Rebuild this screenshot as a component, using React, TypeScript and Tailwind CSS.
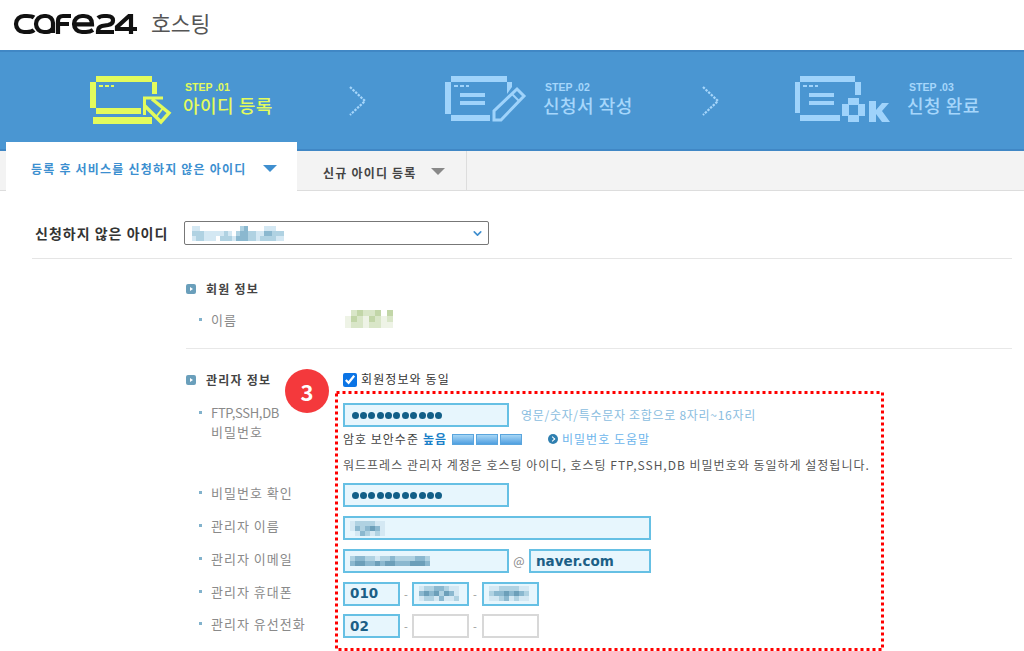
import React from "react";
import { ChevronDown } from "lucide-react";

const KR = "font-['Noto_Sans_CJK_KR','Noto_Sans',sans-serif]";

const blueCells: Record<string, string> = {
  "0": "bg-transparent",
  "1": "bg-[#d4e8f3]",
  "2": "bg-[#b0d2e2]",
  "3": "bg-[#8bb8cf]",
  "4": "bg-[#6c9fb9]",
};

const greenCells: Record<string, string> = {
  "0": "bg-transparent",
  "1": "bg-[#eef3e6]",
  "2": "bg-[#d9e6c8]",
  "3": "bg-[#c2d6a8]",
  "4": "bg-[#a8c48e]",
};

function Mosaic({ rows, size = "w-[5px] h-[5px]", palette = blueCells }: { rows: string[]; size?: string; palette?: Record<string, string> }) {
  return (
    <div className="flex flex-col blur-[0.7px]">
      {rows.map((row, i) => (
        <div key={i} className="flex">
          {row.split("").map((c, j) => (
            <span key={j} className={`${size} ${palette[c]}`} />
          ))}
        </div>
      ))}
    </div>
  );
}

function StepOneIcon() {
  return (
    <svg width="95" height="60" viewBox="0 0 95 60" className="shrink-0 fill-[#e3fb5c] stroke-none">
      <rect x="11" y="5" width="56" height="6" />
      <rect x="5" y="11" width="6" height="26" />
      <rect x="67" y="11" width="5" height="12" />
      <rect x="11" y="37" width="45" height="6" />
      <rect x="14" y="14" width="4" height="2" />
      <rect x="20" y="14" width="4" height="2" />
      <rect x="26" y="14" width="3" height="2" />
      <rect x="8" y="46" width="59" height="7" />
      <path d="M59.5 44V27H78" fill="none" stroke="#e3fb5c" strokeWidth="3" />
      <path d="M67 28L84 42L76 51L60 35" fill="none" stroke="#e3fb5c" strokeWidth="3.4" />
      <path d="M78 37L71 46" fill="none" stroke="#e3fb5c" strokeWidth="2" />
    </svg>
  );
}

function StepTwoIcon() {
  return (
    <svg width="95" height="60" viewBox="0 0 95 60" className="shrink-0 fill-[#9fd3fb] stroke-none">
      <rect x="11" y="5" width="56" height="6" />
      <rect x="5" y="11" width="6" height="32" />
      <path d="M67 11H72V16L67 23Z" />
      <rect x="11" y="44" width="39" height="6" />
      <rect x="14" y="14" width="4" height="2" />
      <rect x="20" y="14" width="4" height="2" />
      <rect x="26" y="14" width="3" height="2" />
      <rect x="20" y="22" width="25" height="4" />
      <rect x="20" y="30" width="25" height="4" />
      <path d="M54 49V40L77 18L84 25L61 49Z" fill="none" stroke="#9fd3fb" strokeWidth="3" />
      <path d="M72 23L79 30" fill="none" stroke="#9fd3fb" strokeWidth="2" />
    </svg>
  );
}

function StepThreeIcon() {
  return (
    <svg width="105" height="60" viewBox="0 0 105 60" className="shrink-0 fill-[#9fd3fb] stroke-none">
      <rect x="10" y="5" width="55" height="6" />
      <rect x="5" y="11" width="5" height="31" />
      <rect x="65" y="11" width="6" height="13" />
      <rect x="10" y="44" width="40" height="6" />
      <rect x="13" y="14" width="4" height="2" />
      <rect x="19" y="14" width="4" height="2" />
      <rect x="25" y="14" width="3" height="2" />
      <rect x="19" y="22" width="25" height="4" />
      <rect x="19" y="30" width="25" height="4" />
      <path d="M58 27H69V33H75V45H69V51H58V45H52V33H58ZM59 34V44H68V34Z" fillRule="evenodd" />
      <rect x="79" y="30" width="7" height="21" />
      <path d="M86 39L92 32H99L92 40L100 51H92L86 43Z" />
    </svg>
  );
}

function StepChevron() {
  return (
    <svg width="18" height="30" viewBox="0 0 18 30" className="shrink-0">
      <path d="M1 1L16 15L1 29" fill="none" stroke="#a6d6fb" strokeWidth="2.2" strokeDasharray="2.4 1.2" />
    </svg>
  );
}

function Step({ step, title, active, icon, gap, width }: { step: string; title: string; active?: boolean; icon: React.ReactNode; gap: string; width: string }) {
  return (
    <div className={`flex items-center ${width} ${gap}`}>
      {icon}
      <div className={`-mt-[4px] flex flex-col ${active ? "text-[#e3fb5c]" : "text-[#a6d6fb]"}`}>
        <span className="pl-[2px] font-['Liberation_Sans',sans-serif] text-[10.5px] font-bold leading-[12px]">{step}</span>
        <span className={`${KR} text-[18px] font-medium leading-[24px] tracking-[0.5px]`}>{title}</span>
      </div>
    </div>
  );
}

function Heading({ children }: { children: React.ReactNode }) {
  return (
    <div className="flex items-center gap-[10px]">
      <span className="flex h-[10px] w-[10px] items-center justify-center rounded-[2px] bg-[#6a9fbb]">
        <span className="h-0 w-0 border-y-[2px] border-l-[3px] border-y-transparent border-l-white" />
      </span>
      <span className={`${KR} text-[12px] font-bold leading-[16px] tracking-[1.2px] text-[#444]`}>{children}</span>
    </div>
  );
}

function RowLabel({ children }: { children: React.ReactNode }) {
  return (
    <div className="flex items-start pl-[13px] text-[13px] leading-[19px] tracking-[1px] text-[#8a8a8a]">
      <span className="mr-[9px] mt-[8px] h-[3px] w-[3px] shrink-0 bg-[#82b2cc]" />
      <span>{children}</span>
    </div>
  );
}

function Field({ width, empty, bold, children }: { width: string; empty?: boolean; bold?: boolean; children?: React.ReactNode }) {
  return (
    <div
      className={`flex h-6 items-center overflow-hidden border-2 px-[5px] ${width} ${
        empty ? "border-[#d8d8d8] bg-white" : "border-[#66c0e4] bg-[#e7f6fd]"
      } ${bold ? "font-['DejaVu_Sans',sans-serif] text-[13.5px] font-bold text-[#1c5f86]" : ""}`}
    >
      {children}
    </div>
  );
}

function Dots() {
  return (
    <div className="ml-[1.5px] flex gap-[1.4px]">
      {Array.from({ length: 11 }).map((_, i) => (
        <span key={i} className="h-[7px] w-[7px] rounded-full bg-[#125f88]" />
      ))}
    </div>
  );
}

function FormRow({ label, children }: { label: React.ReactNode; children: React.ReactNode }) {
  return (
    <div className="grid grid-cols-[157px_1fr]">
      <RowLabel>{label}</RowLabel>
      <div className="flex items-center">{children}</div>
    </div>
  );
}

function PhoneFields({ first, second, third }: { first: string; second?: React.ReactNode; third?: React.ReactNode }) {
  return (
    <>
      <Field width="w-[57px]" bold>{first}</Field>
      <span className="w-3 pl-[4px] text-[11px] leading-6 text-[#999]">-</span>
      <Field width="w-[57px]" empty={!second}>{second}</Field>
      <span className="w-[13px] pl-[4px] text-[11px] leading-6 text-[#999]">-</span>
      <Field width="w-[57px]" empty={!third}>{third}</Field>
    </>
  );
}

export default function App() {
  return (
    <div className={`relative h-[651px] w-full overflow-hidden bg-white ${KR}`}>
      {/* logo */}
      <div className="flex h-[50px] items-center pl-[11px]">
        <svg width="135" height="35" viewBox="0 0 135 35" className="-mt-[5px] shrink-0" fill="none" stroke="#111" strokeWidth="4.2">
          <path d="M23 12.5Q21 11 16 11H13A8 8 0 0 0 13 27H16Q21 27 23 25" />
          <path d="M42 28V18A7 7 0 0 0 35 11H33A8 8 0 0 0 33 27H36Q40 27 42 23" />
          <path d="M60 11H52Q47 11 47 16V29M47 19H58" />
          <path d="M62 19.3H81Q81 11 73 11H71A8 8 0 0 0 71 27H75Q79 27 82 25" />
          <path d="M87 13Q89 11 93 11H96Q102 11 102 15.5Q102 19 97 20L91 21Q87 22 87 26V27H103" />
          <path d="M120 29V11H118L106 22V24H126" />
        </svg>
        <span className="-mt-[5px] ml-[5px] text-[21.5px] leading-[28px] text-[#555]">호스팅</span>
      </div>

      {/* step band */}
      <div className="flex h-[101px] items-center border-y-[2px] border-[#4087c5] bg-[#4a96d2] pl-[85px]">
        <Step step="STEP .01" title="아이디 등록" active icon={<StepOneIcon />} gap="gap-[3px]" width="w-[264px]" />
        <div className="mr-[73px]"><StepChevron /></div>
        <Step step="STEP .02" title="신청서 작성" icon={<StepTwoIcon />} gap="gap-[8px]" width="w-[262px]" />
        <div className="mr-[70px]"><StepChevron /></div>
        <Step step="STEP .03" title="신청 완료" icon={<StepThreeIcon />} gap="gap-[12px]" width="w-[234px]" />
      </div>

      {/* tabs */}
      <div className="flex h-[40px] border-b border-[#ddd] bg-[#f3f3f3] pl-[6px]">
        <div className="relative z-10 -mt-[9px] flex h-[49px] w-[291px] items-center gap-[17px] bg-white pl-[25px] pt-[5px] text-[12px] font-bold tracking-[1.2px] text-[#3c8fd0]">
          <span>등록 후 서비스를 신청하지 않은 아이디</span>
          <span className="-mt-[1px] h-0 w-0 border-x-[7px] border-t-[7px] border-x-transparent border-t-[#3f8fcf]" />
        </div>
        <div className="flex w-[170px] items-center gap-[14px] border-r border-[#ddd] pl-[26px] pt-[4px] text-[12px] font-bold tracking-[1.2px] text-[#444]">
          <span>신규 아이디 등록</span>
          <span className="-mt-[2px] h-0 w-0 border-x-[7px] border-t-[7px] border-x-transparent border-t-[#888]" />
        </div>
      </div>

      {/* select row */}
      <div className="mt-[30px] flex items-center pl-[35px]">
        <span className="w-[149px] whitespace-nowrap text-[14px] font-bold tracking-[1px] text-[#333]">신청하지 않은 아이디</span>
        <div className="flex h-6 w-[305px] items-center justify-between rounded-[2px] border border-[#777] pl-[7px] pr-[4px]">
          <Mosaic
            rows={[
              "110000000000230000111000",
              "222111112102332211332220",
              "122111022213332212222110",
            ]}
            size="w-[4px] h-[5px]"
          />
          <ChevronDown size={13} strokeWidth={3} className="text-[#3f8fcf]" />
        </div>
      </div>
      <div className="ml-[32px] mt-[13px] w-[980px] border-t border-[#e5e5e5]" />

      {/* member info */}
      <div className="ml-[186px] w-[826px]">
        <div className="mt-[22px]"><Heading>회원 정보</Heading></div>
        <div className="mt-[13px] grid grid-cols-[159px_1fr] items-center">
          <RowLabel>이름</RowLabel>
          <div className="-mt-[1px]">
            <Mosaic
              rows={["02322303", "13213212", "12212211"]}
              size="w-[6px] h-[6px]"
              palette={greenCells}
            />
          </div>
        </div>
        <div className="mt-[19px] border-t border-[#e8e8e8]" />

        {/* admin info */}
        <div className="mt-[23px] grid grid-cols-[157px_1fr]">
          <Heading>관리자 정보</Heading>
          <label className="flex h-4 items-center gap-[4px] text-[12px] tracking-[1.1px] text-[#333]">
            <input type="checkbox" defaultChecked className="m-0 h-[14px] w-[14px] accent-[#0b74e5]" />
            <span className="-mt-[3px]">회원정보와 동일</span>
          </label>
        </div>

        <div className="mt-[15px] flex flex-col gap-[8.75px]">
          <div className="grid grid-cols-[157px_1fr]">
            <RowLabel>
              <span className="tracking-[-0.3px]">FTP,SSH,DB</span>
              <br />
              비밀번호
            </RowLabel>
            <div className="flex flex-col">
              <div className="flex items-center gap-[12px]">
                <Field width="w-[166px]"><Dots /></Field>
                <span className="text-[12px] tracking-[0.7px] text-[#8abde0]">영문/숫자/특수문자 조합으로 8자리~16자리</span>
              </div>
              <div className="mt-[3px] flex h-[18px] items-center text-[12px] tracking-[1px] text-[#444]">
                <span>암호 보안수준</span>
                <span className="ml-[4px] font-bold text-[#1a7fc8]">높음</span>
                <div className="ml-[5px] flex gap-[2px]">
                  <span className="h-[11px] w-[22px] border border-[#5aa5dd] bg-gradient-to-b from-[#a6d6f5] to-[#4f9fe0]" />
                  <span className="h-[11px] w-[22px] border border-[#5aa5dd] bg-gradient-to-b from-[#a6d6f5] to-[#4f9fe0]" />
                  <span className="h-[11px] w-[22px] border border-[#5aa5dd] bg-gradient-to-b from-[#a6d6f5] to-[#4f9fe0]" />
                </div>
                <span className="ml-[26px] flex h-[10px] w-[10px] items-center justify-center rounded-full bg-[#2f7fb0]">
                  <span className="h-[4px] w-[4px] -translate-x-[0.5px] rotate-45 border-r border-t border-white" />
                </span>
                <span className="ml-[4px] text-[#6cb5ec]">비밀번호 도움말</span>
              </div>
              <div className="mt-[8px] h-[18.5px] whitespace-nowrap text-[12px] leading-[18px] tracking-[1px] text-[#555]">
                워드프레스 관리자 계정은 호스팅 아이디, 호스팅 FTP,SSH,DB 비밀번호와 동일하게 설정됩니다.
              </div>
            </div>
          </div>

          <FormRow label="비밀번호 확인">
            <Field width="w-[166px]"><Dots /></Field>
          </FormRow>
          <FormRow label="관리자 이름">
            <Field width="w-[308px]">
              <Mosaic rows={["12222110", "13234310", "01321210"]} />
            </Field>
          </FormRow>
          <FormRow label="관리자 이메일">
            <Field width="w-[166px]">
              <Mosaic
                rows={["2332212232222332", "3443343443334443"]}
                size="w-[5px] h-[5px]"
              />
            </Field>
            <span className="w-[20px] text-center text-[12px] text-[#888]">@</span>
            <Field width="w-[122px]" bold>naver.com</Field>
          </FormRow>
          <FormRow label="관리자 휴대폰">
            <PhoneFields
              first="010"
              second={<Mosaic rows={["12233211", "34342431", "12213112"]} />}
              third={<Mosaic rows={["11222211", "23343432", "11231211"]} />}
            />
          </FormRow>
          <FormRow label="관리자 유선전화">
            <PhoneFields first="02" />
          </FormRow>
        </div>
      </div>

      {/* annotation overlay */}
      <svg width="550" height="261" viewBox="0 0 550 261" className="absolute left-[334px] top-[390px]" fill="none">
        <rect x="2.5" y="2.5" width="546" height="257" stroke="#f00" strokeWidth="3" strokeDasharray="3 3" />
      </svg>
      <div className="absolute left-[285px] top-[369px] flex h-11 w-11 items-center justify-center rounded-full bg-[#f4393c] text-[22px] font-bold text-white">
        3
      </div>
    </div>
  );
}
